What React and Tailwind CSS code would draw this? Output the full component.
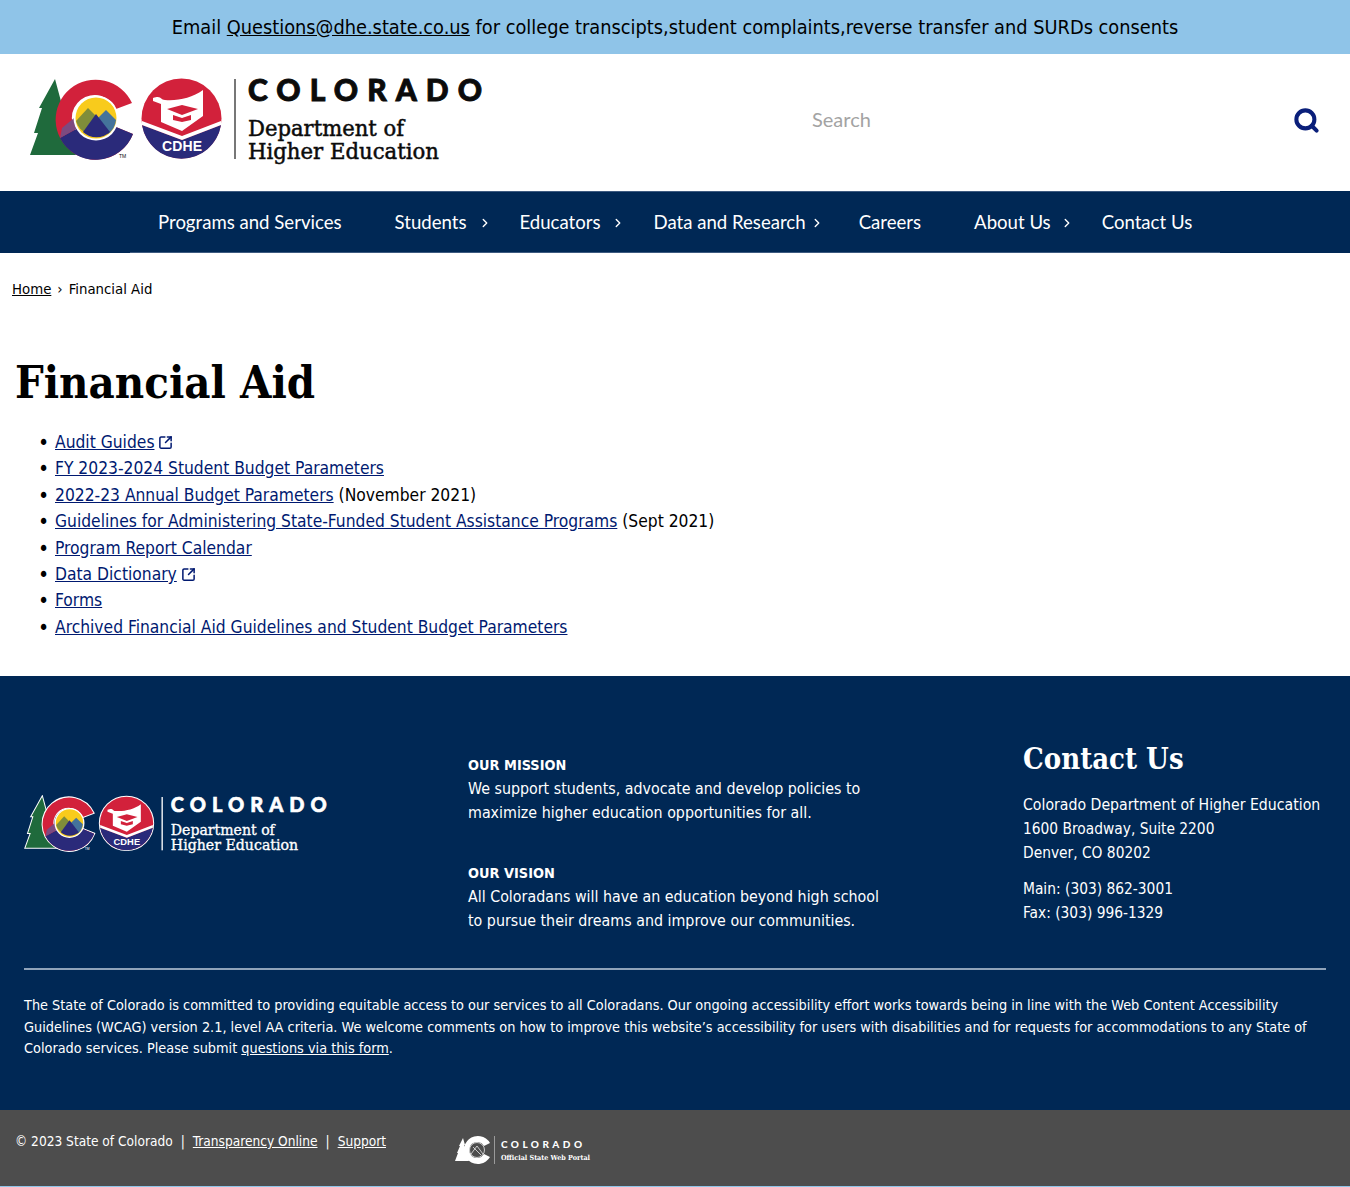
import { Search, SquareArrowOutUpRight, ChevronRight } from 'lucide-react';

const BODY = "font-['DejaVu_Sans_Condensed','DejaVu_Sans',sans-serif]";
const SLAB = "font-['DejaVu_Serif_Condensed','DejaVu_Serif',serif]";

const navItems = [
  { label: 'Programs and Services', pad: 'px-[26.5px]' },
  { label: 'Students', pad: 'px-[26.5px]', chevron: 'right-[-26px]' },
  { label: 'Educators', pad: 'px-[26.5px]', chevron: 'right-[-24px]' },
  { label: 'Data and Research', pad: 'px-[26.5px]', chevron: 'right-[-18px]' },
  { label: 'Careers', pad: 'px-[26.5px]' },
  { label: 'About Us', pad: 'pl-[26.5px] pr-[24.5px]', chevron: 'right-[-23px]' },
  { label: 'Contact Us', pad: 'px-[26.5px]' },
];

const links = [
  { label: 'Audit Guides', external: true },
  { label: 'FY 2023-2024 Student Budget Parameters' },
  { label: '2022-23 Annual Budget Parameters', note: ' (November 2021)' },
  { label: 'Guidelines for Administering State-Funded Student Assistance Programs', note: ' (Sept 2021)' },
  { label: 'Program Report Calendar' },
  { label: 'Data Dictionary', external: true },
  { label: 'Forms' },
  { label: 'Archived Financial Aid Guidelines and Student Budget Parameters' },
];

// Drawn in page coordinates of the header logo, the footer just scales it down
function CdheLogo({ dark, className }) {
  const ink = dark ? '#ffffff' : '#0b0b0b';
  const outline = dark ? { stroke: '#ffffff', strokeWidth: 3, paintOrder: 'stroke' } : {};
  return (
    <svg viewBox="28 76 460 90" className={className}>
      <path d="M55 79L62 105L59 105L68 130L64 130L76 155L30 155L38 133L34 133L42 108L39 108Z" fill="#1f6a3c" {...outline} />
      <path d="M132 103A40 40 0 1 0 133 134L116 127A23 23 0 1 1 116 109Z" fill="#d2213b" {...outline} />
      <path d="M60 138A40 40 0 0 0 133 134L116 127A23 23 0 0 1 78 128Z" fill="#2a2a7a" />
      <path d="M60 138L78 128L74 118L62 128Z" fill="#7d4a80" />
      <circle cx="96" cy="118" r="22.5" fill="#ffffff" />
      <circle cx="96" cy="118" r="20.5" fill="#f8cb1c" />
      <path d="M76 121L88 108L98 118L88 134A20 20 0 0 1 76 121Z" fill="#7f8d3a" />
      <path d="M98 118L106 110L116 120A20 20 0 0 1 108 134Z" fill="#44739b" />
      <path d="M83 132L96 114L110 132A20 20 0 0 1 83 132Z" fill="#2a2a7a" />
      <text x="119" y="158" fontSize="5" fontFamily="Liberation Sans" fill={ink}>TM</text>

      <circle cx="181.5" cy="118.5" r="40" fill="#d2213b" {...outline} />
      <path d="M142 125L182 140L221 125A40 40 0 0 1 142 125Z" fill="#2a2a7a" />
      <path d="M142 121L182 136L221 121L221 125L182 140L142 125Z" fill="#ffffff" />
      <path d="M153 98C162 95 160 100 165 100C178 101 192 98 203 90L203 116L182 131L161 122L161 104L153 101Z" fill="#ffffff" />
      <path d="M167 109L182 105L198 109L182 115Z" fill="#d2213b" />
      <path d="M173 115L182 118L191 115L191 120L182 122L173 120Z" fill="#d2213b" />
      <text x="162" y="150.5" fontSize="14" fontWeight="700" fontFamily="Liberation Sans" textLength="40" fill="#ffffff">CDHE</text>

      <rect x="234" y="79" width="2" height="80" fill={dark ? '#ffffff' : '#777777'} />
      <text x="248" y="101" fontSize="30" fontWeight="900" fontFamily="Lato" textLength="234" stroke={ink} strokeWidth="0.9" fill={ink}>COLORADO</text>
      <text x="248" y="136" fontSize="22" fontFamily="DejaVu Serif" textLength="156" lengthAdjust="spacingAndGlyphs" stroke={ink} strokeWidth="0.5" fill={ink}>Department of</text>
      <text x="248" y="159" fontSize="22" fontFamily="DejaVu Serif" textLength="191" lengthAdjust="spacingAndGlyphs" stroke={ink} strokeWidth="0.5" fill={ink}>Higher Education</text>
    </svg>
  );
}

function PortalLogo() {
  return (
    <svg viewBox="0 0 136 30" className="w-[136px] h-[30px] mt-[5px]">
      <path d="M8 3L10 10L9 10L12 17L11 17L14 26L0 26L3 18L2 18L5 11L4 11Z" fill="#ffffff" />
      <path d="M35 8A14 14 0 1 0 35 22L29 19A8 8 0 1 1 29 11Z" fill="#ffffff" />
      <circle cx="22" cy="15" r="7.5" fill="none" stroke="#ffffff" strokeWidth="0.7" />
      <path d="M16 19L22 11L28 19M18 12L26 20" fill="none" stroke="#ffffff" strokeWidth="0.7" />
      <rect x="39" y="1" width="1" height="28" fill="#9a9a9a" />
      <text x="46" y="13" fontSize="10" fontWeight="900" fontFamily="Lato" textLength="81" fill="#ffffff">COLORADO</text>
      <text x="46" y="24.5" fontSize="7" fontWeight="700" fontFamily="DejaVu Serif" textLength="89" lengthAdjust="spacingAndGlyphs" fill="#ffffff">Official State Web Portal</text>
    </svg>
  );
}

export default function App() {
  return (
    <div className={`${BODY} bg-white text-black`}>
      <div className="h-[54px] pt-[1px] bg-[#8fc4e8] flex items-center justify-center text-[19.8px]">
        <p>
          Email <a className="underline" href="#">Questions@dhe.state.co.us</a> for college transcipts,student complaints,reverse transfer and SURDs consents
        </p>
      </div>

      <header className="h-[137px] flex items-center pl-[28px] pr-[30px]">
        <CdheLogo className="w-[460px] h-[90px] mt-[-4px]" />
        <span className="ml-[324px] mb-[7px] text-[20px] text-[#a3a3a3] font-['Lato',sans-serif]">Search</span>
        <Search className="ml-auto mb-[5px] text-[#0a1f7a]" size={27} strokeWidth={3.6} />
      </header>

      <nav className="bg-[#002855] h-[62px] flex justify-center">
        <ul className="w-[1090px] pl-[1.5px] pt-[1px] flex items-center border-y border-[#3d5a80] text-white text-[18.6px] font-['Lato',sans-serif]">
          {navItems.map((item) => (
            <li key={item.label} className={item.pad}>
              <span className="relative inline-block whitespace-nowrap">
                {item.label}
                {item.chevron && (
                  <ChevronRight className={`absolute top-[7px] ${item.chevron}`} size={14} strokeWidth={2.4} />
                )}
              </span>
            </li>
          ))}
        </ul>
      </nav>

      <main className="pt-[25px] pb-[36px]">
        <p className="pl-[12px] text-[14.8px] leading-[22px]">
          <a className="underline" href="#">Home</a>
          <span className="mx-[6px]">›</span>
          Financial Aid
        </p>
        <h1 className={`${SLAB} mt-[56px] pl-[15px] text-[45px] leading-[54px] font-bold`}>Financial Aid</h1>
        <ul className="mt-[19px] pl-[55px] text-[17.3px] leading-[26.4px]">
          {links.map((link) => (
            <li key={link.label} className="relative before:absolute before:left-[-17px] before:top-[1px] before:text-[21px] before:content-['•']">
              <a className="underline text-[#001970]" href="#">{link.label}</a>
              {link.external && (
                <SquareArrowOutUpRight className="inline ml-[4px] mb-[2px] text-[#001970]" size={15} strokeWidth={2.4} />
              )}
              {link.note}
            </li>
          ))}
        </ul>
      </main>

      <footer className="bg-[#002855] text-white px-[24px] pt-[60px] pb-[50px]">
        <div className="flex items-start">
          <div className="w-[444px] pt-[59px]">
            <CdheLogo dark className="w-[307px] h-[60px]" />
          </div>
          <div className="w-[555px] pt-[17px] text-[15.85px] leading-[24px]">
            <p className="font-bold text-[14.4px]">OUR MISSION</p>
            <p>We support students, advocate and develop policies to<br />maximize higher education opportunities for all.</p>
            <p className="font-bold text-[14.4px] mt-[36px]">OUR VISION</p>
            <p>All Coloradans will have an education beyond high school<br />to pursue their dreams and improve our communities.</p>
          </div>
          <div className="text-[15.35px] leading-[24px] whitespace-nowrap">
            <h2 className={`${SLAB} pt-[2px] text-[29px] leading-[42px] font-bold`}>Contact Us</h2>
            <p className="mt-[13px]"><span className="text-[15.7px]">Colorado Department of Higher Education</span><br />1600 Broadway, Suite 2200<br />Denver, CO 80202</p>
            <p className="mt-[12px]">Main: (303) 862-3001<br />Fax: (303) 996-1329</p>
          </div>
        </div>
        <hr className="mt-[35px] border-0 h-[2px] bg-[#8fa3ba]" />
        <p className="mt-[25px] text-[14.35px] leading-[21.6px]">
          The State of Colorado is committed to providing equitable access to our services to all Coloradans. Our ongoing accessibility effort works towards being in line with the Web Content Accessibility Guidelines (WCAG) version 2.1, level AA criteria. We welcome comments on how to improve this website’s accessibility for users with disabilities and for requests for accommodations to any State of Colorado services. Please submit <a className="underline" href="#">questions via this form</a>.
        </p>
      </footer>

      <div className="h-[77px] bg-[#4d4d4d] border-b border-[#8fc4e8] text-white flex items-start pl-[15px] pt-[20px] text-[13.6px] leading-[22px]">
        <p className="w-[440px]">
          © 2023 State of Colorado<span className="mx-[8px]">|</span><a className="underline" href="#">Transparency Online</a><span className="mx-[8px]">|</span><a className="underline" href="#">Support</a>
        </p>
        <PortalLogo />
      </div>
    </div>
  );
}
